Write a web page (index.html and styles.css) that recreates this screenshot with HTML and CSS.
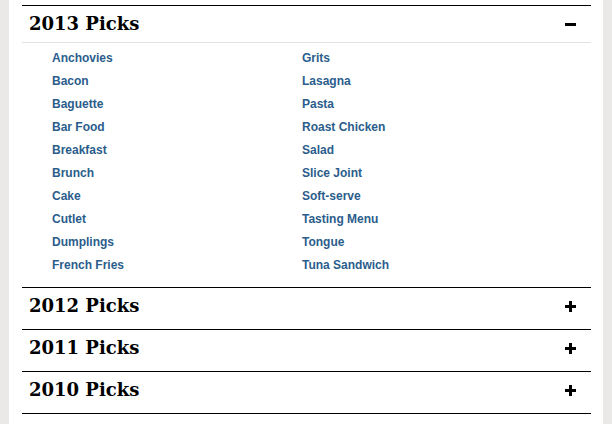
FILE: index.html
```html
<!DOCTYPE html>
<html>
<head>
<meta charset="utf-8">
<link rel="stylesheet" href="styles.css">
</head>
<body>
<div class="page">
  <section class="picks open">
    <div class="picks-head">
      <h2 class="picks-title">2013 Picks</h2>
      <svg class="toggle" width="11" height="11" viewBox="0 0 11 11"><rect x="0" y="4" width="11" height="3" fill="#000"/></svg>
    </div>
    <ul class="picks-list">
      <li><a href="#">Anchovies</a></li>
      <li><a href="#">Bacon</a></li>
      <li><a href="#">Baguette</a></li>
      <li><a href="#">Bar Food</a></li>
      <li><a href="#">Breakfast</a></li>
      <li><a href="#">Brunch</a></li>
      <li><a href="#">Cake</a></li>
      <li><a href="#">Cutlet</a></li>
      <li><a href="#">Dumplings</a></li>
      <li><a href="#">French Fries</a></li>
      <li><a href="#">Grits</a></li>
      <li><a href="#">Lasagna</a></li>
      <li><a href="#">Pasta</a></li>
      <li><a href="#">Roast Chicken</a></li>
      <li><a href="#">Salad</a></li>
      <li><a href="#">Slice Joint</a></li>
      <li><a href="#">Soft-serve</a></li>
      <li><a href="#">Tasting Menu</a></li>
      <li><a href="#">Tongue</a></li>
      <li><a href="#">Tuna Sandwich</a></li>
    </ul>
  </section>
  <section class="picks">
    <div class="picks-head">
      <h2 class="picks-title">2012 Picks</h2>
      <svg class="toggle" width="11" height="11" viewBox="0 0 11 11"><rect x="0" y="4" width="11" height="3" fill="#000"/><rect x="4" y="0" width="3" height="11" fill="#000"/></svg>
    </div>
  </section>
  <section class="picks">
    <div class="picks-head">
      <h2 class="picks-title">2011 Picks</h2>
      <svg class="toggle" width="11" height="11" viewBox="0 0 11 11"><rect x="0" y="4" width="11" height="3" fill="#000"/><rect x="4" y="0" width="3" height="11" fill="#000"/></svg>
    </div>
  </section>
  <section class="picks">
    <div class="picks-head">
      <h2 class="picks-title">2010 Picks</h2>
      <svg class="toggle" width="11" height="11" viewBox="0 0 11 11"><rect x="0" y="4" width="11" height="3" fill="#000"/><rect x="4" y="0" width="3" height="11" fill="#000"/></svg>
    </div>
  </section>
  <section class="picks">
    <div class="picks-head">
      <h2 class="picks-title">2009 Picks</h2>
      <svg class="toggle" width="11" height="11" viewBox="0 0 11 11"><rect x="0" y="4" width="11" height="3" fill="#000"/><rect x="4" y="0" width="3" height="11" fill="#000"/></svg>
    </div>
  </section>
</div>
</body>
</html>
```
FILE: styles.css
```css
html, body {
  margin: 0;
  padding: 0;
  background: #eae9e7;
  height: 100%;
  overflow: hidden;
}
.page {
  background: #fff;
  margin: 0 9px;
  padding: 5px 12px 0 13px;
  min-height: 100%;
  box-sizing: border-box;
}
.picks {
  border-top: 1px solid #000;
}
.picks-head {
  display: flex;
  align-items: flex-start;
  justify-content: space-between;
  height: 41px;
  padding: 0 15px 0 7px;
}
.picks.open .picks-head {
  height: 36px;
  border-bottom: 1px solid #e3e3e3;
}
.picks-title {
  margin: 0;
  font-family: "DejaVu Serif", Georgia, serif;
  font-weight: bold;
  font-size: 18px;
  line-height: 36px;
  color: #000;
}
.toggle {
  display: block;
  margin-top: 13px;
}
.picks-list {
  list-style: none;
  margin: 0;
  padding: 4px 0 10px 30px;
  display: grid;
  grid-template-columns: 250px 1fr;
  grid-template-rows: repeat(10, 23px);
  grid-auto-flow: column;
}
.picks-list li {
  font-family: "Liberation Sans", Arial, sans-serif;
  font-weight: bold;
  font-size: 12px;
  line-height: 23px;
}
.picks-list a {
  color: #2b5d8c;
  text-decoration: none;
}
```
